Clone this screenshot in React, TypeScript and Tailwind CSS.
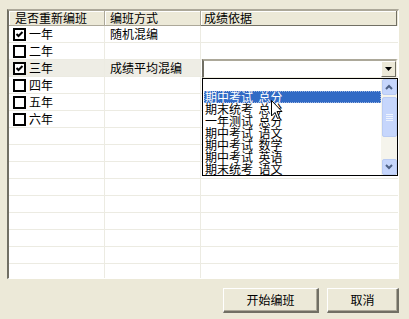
import React from "react";

type Row = {
  name: string;
  checked?: boolean;
  mode?: string;
  active?: boolean;
};

const rows: Row[] = [
  { name: "一年", checked: true, mode: "随机混编" },
  { name: "二年" },
  { name: "三年", checked: true, mode: "成绩平均混编", active: true },
  { name: "四年" },
  { name: "五年" },
  { name: "六年" },
  { name: "" },
  { name: "" },
  { name: "" },
  { name: "" },
  { name: "" },
  { name: "" },
  { name: "" },
  { name: "" },
  { name: "" },
];

const options = [
  "",
  "期中考试 总分",
  "期末统考 总分",
  "一年测试 总分",
  "期中考试 语文",
  "期中考试 数学",
  "期中考试 英语",
  "期末统考 语文",
];

function CheckBox({ checked }: { checked?: boolean }) {
  return (
    <svg width="13" height="13" viewBox="0 0 13 13" className="shrink-0">
      <rect x="1" y="1" width="11" height="11" fill="#fff" stroke="#000" strokeWidth="2" />
      {checked && (
        <path d="M3.5 6 L5.5 8 L9.5 4" fill="none" stroke="#000" strokeWidth="2" />
      )}
    </svg>
  );
}

function ScrollArrow({ up }: { up?: boolean }) {
  return (
    <div className="h-[16px] w-[15px] rounded-[2px] border border-[#B9CBF3] bg-[#C6D6FC] flex items-center justify-center">
      <svg width="8" height="6" viewBox="0 0 8 6">
        <path
          d={up ? "M1 5 L4 2 L7 5" : "M1 1 L4 4 L7 1"}
          fill="none"
          stroke="#4D6185"
          strokeWidth="2"
        />
      </svg>
    </div>
  );
}

export default function App() {
  return (
    <div
      className="relative w-[409px] h-[319px] bg-[#ECE9D8] pl-[7px] pt-[9px] text-[12px] text-black overflow-hidden"
      style={{ fontFamily: '"Noto Sans CJK SC", "Noto Sans", sans-serif' }}
    >
      {/* Grid */}
      <div className="w-[392px] h-[270px] border-t-2 border-l-2 border-t-[#ACA899] border-l-[#716F64] border-r border-b border-r-white border-b-white bg-white overflow-hidden">
        {/* Header */}
        <div className="flex h-[15px] bg-[#ECE9D8] leading-[14px]">
          <div className="w-[96px] pl-[6px] border-r border-b border-[#ACA899] shadow-[inset_1px_1px_0_#fff]">
            是否重新编班
          </div>
          <div className="w-[96px] pl-[5px] border-r border-b border-[#ACA899] shadow-[inset_1px_1px_0_#fff]">
            编班方式
          </div>
          <div className="w-[196px] pl-[3px] border-r border-b border-[#716F64] shadow-[inset_1px_1px_0_#fff]">
            成绩依据
          </div>
        </div>

        {/* Body */}
        {rows.map((row, i) => (
          <div key={i} className="flex h-[17px] leading-[16px]">
            <div
              className={`w-[96px] pl-[4px] flex items-center gap-[3px] border-r border-b border-[#ECEBE2] ${
                row.active ? "bg-[#EEEDE5]" : ""
              }`}
            >
              {row.name && <CheckBox checked={row.checked} />}
              <span>{row.name}</span>
            </div>
            <div
              className={`w-[96px] pl-[5px] border-r border-b border-[#ECEBE2] ${
                row.active ? "bg-[#EEEDE5]" : ""
              }`}
            >
              {row.mode}
            </div>
            <div className="relative w-[197px] border-b border-[#ECEBE2]">
              {row.active && (
                <div className="absolute left-[1px] top-[-1px] w-[195px] h-[19px] flex border-t-2 border-l-2 border-t-[#ACA899] border-l-[#716F64] border-r border-b border-r-[#F1EFE2] border-b-[#F1EFE2] bg-white">
                  <div className="flex-1" />
                  <div className="w-[15px] h-[16px] bg-[#ECE9D8] border-t border-l border-t-white border-l-white border-r border-b border-r-[#716F64] border-b-[#716F64] flex items-center justify-center">
                    <svg width="7" height="4" viewBox="0 0 7 4">
                      <path d="M0 0 H7 L3.5 4 Z" fill="#000" />
                    </svg>
                  </div>
                </div>
              )}
            </div>
          </div>
        ))}
      </div>

      {/* Buttons */}
      <div className="flex justify-end gap-[8px] mt-[9px] w-[392px]">
        <button className="w-[96px] h-[25px] bg-[#ECE9D8] border-t border-l border-t-white border-l-white border-r-2 border-b-2 border-r-[#716F64] border-b-[#716F64] shadow-[inset_-1px_-1px_0_#ACA899]">
          开始编班
        </button>
        <button className="w-[72px] h-[25px] bg-[#ECE9D8] border-t border-l border-t-white border-l-white border-r-2 border-b-2 border-r-[#716F64] border-b-[#716F64] shadow-[inset_-1px_-1px_0_#ACA899]">
          取消
        </button>
      </div>

      {/* Dropdown list */}
      <div className="absolute left-[202px] top-[78px] w-[196px] h-[98px] border border-black bg-white flex">
        <div className="flex-1 pl-[1px] leading-[12px]">
          {options.map((o, i) => (
            <div
              key={i}
              className={`h-[12px] pl-[1px] whitespace-pre ${
                i === 1 ? "bg-[#316AC5] text-white outline outline-1 outline-dotted outline-[#9FB6E0] -outline-offset-1" : ""
              }`}
            >
              {o.replace(" ", "  ")}
            </div>
          ))}
        </div>
        <div className="w-[16px] bg-[#F5F4EC] flex flex-col items-center">
          <ScrollArrow up />
          <div className="mt-[2px] h-[40px] w-[15px] rounded-[2px] border border-[#B9CBF3] bg-[#C6D6FC] flex flex-col items-center justify-center gap-[1px]">
            <div className="w-[7px] h-px bg-[#EEF4FE]" />
            <div className="w-[7px] h-px bg-[#EEF4FE]" />
            <div className="w-[7px] h-px bg-[#EEF4FE]" />
            <div className="w-[7px] h-px bg-[#EEF4FE]" />
          </div>
          <div className="flex-1" />
          <ScrollArrow />
        </div>
      </div>

      {/* Mouse cursor */}
      <svg
        className="absolute left-[271px] top-[100px]"
        width="12"
        height="20"
        viewBox="0 0 12 20"
      >
        <path
          d="M0.5 0.5 V16 L4 12.5 L6.5 18.5 L8.5 17.5 L6 11.5 H11 Z"
          fill="#fff"
          stroke="#000"
          strokeWidth="1"
        />
      </svg>
    </div>
  );
}
